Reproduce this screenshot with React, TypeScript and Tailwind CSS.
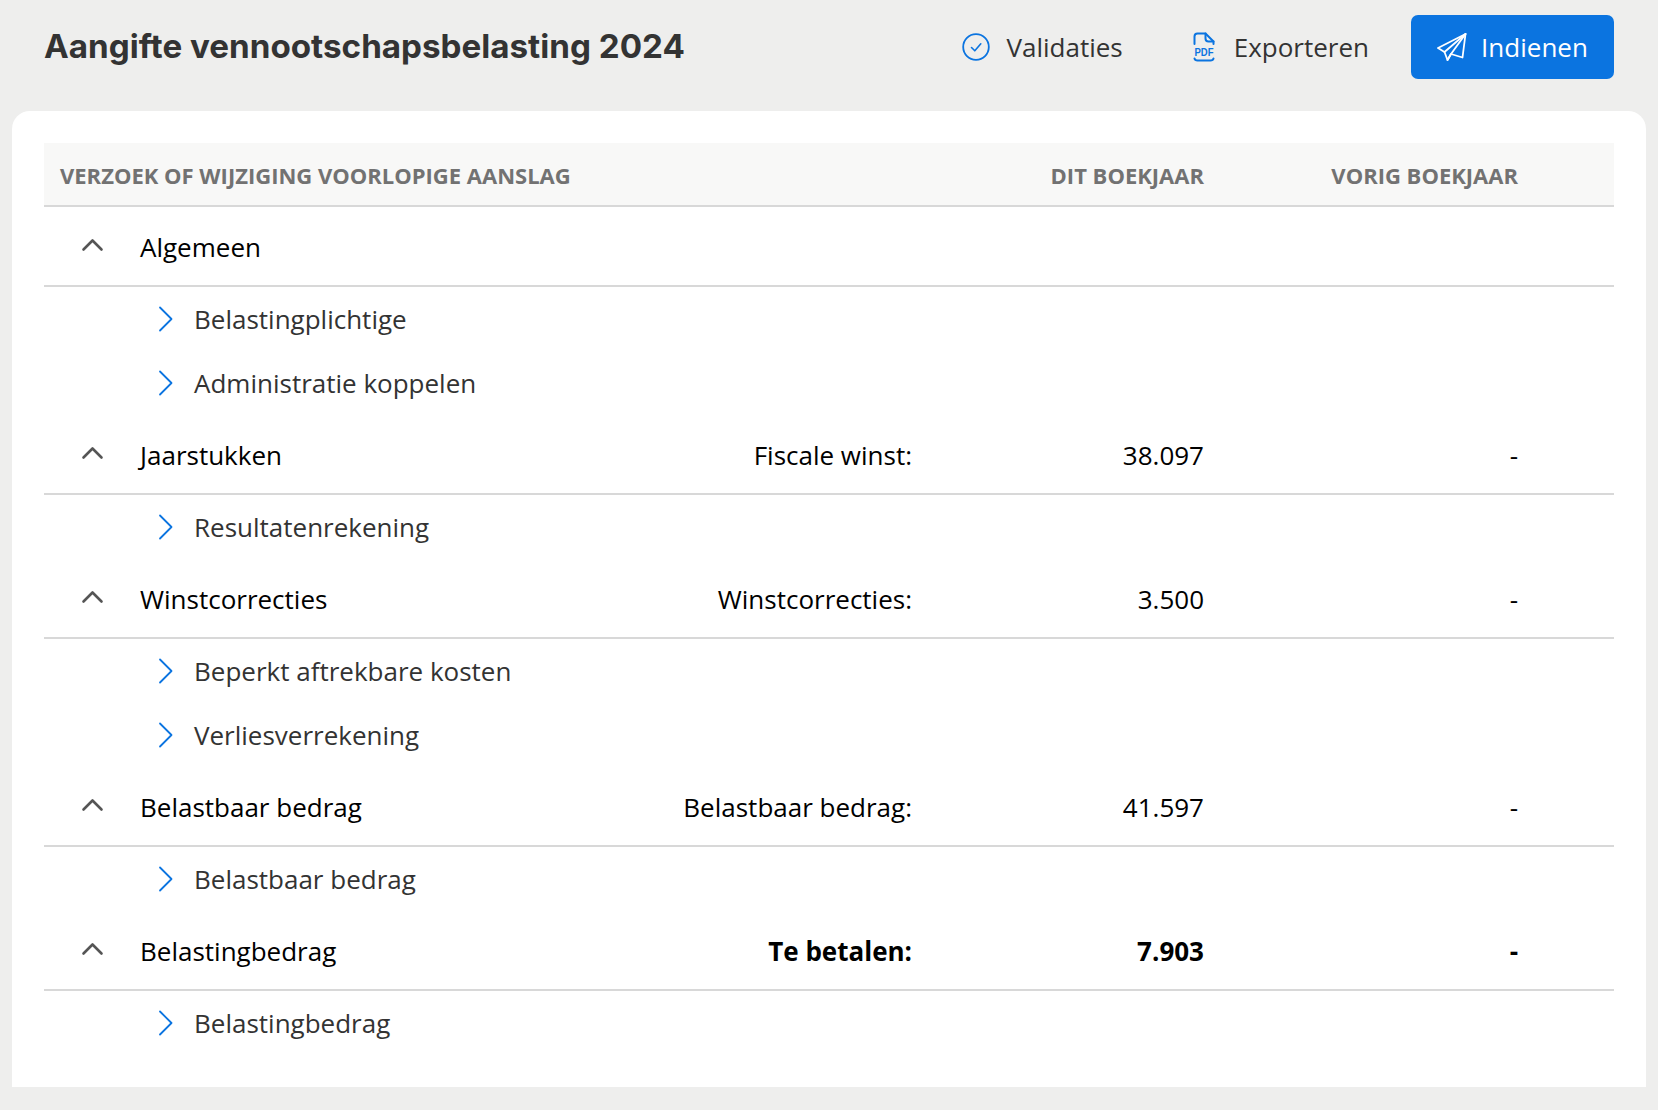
const Up = () => (
  <svg width="26" height="16" viewBox="0 0 26 16" fill="none" stroke="#555" strokeWidth="2.6" strokeLinecap="round" strokeLinejoin="round" className="block">
    <path d="M3.5 12.5 L12.5 3.5 L21.5 12.5" />
  </svg>
);
const Right = () => (
  <svg width="16" height="26" viewBox="0 0 16 26" fill="none" stroke="#0b74e0" strokeWidth="1.8" strokeLinecap="round" strokeLinejoin="round" className="block">
    <path d="M3 1.5 L14.5 13 L3 24.5" />
  </svg>
);
const Check = () => (
  <svg width="28" height="28" viewBox="0 0 28 28" fill="none" stroke="#0b74e0" className="block">
    <circle cx="14" cy="14" r="12.8" strokeWidth="1.8" />
    <path d="M9.5 14.5 L12.8 17.8 L18.8 10.8" strokeWidth="1.6" strokeLinecap="round" strokeLinejoin="round" />
  </svg>
);
const Pdf = () => (
  <svg width="22" height="30" viewBox="0 0 22 30" fill="none" stroke="#0b74e0" strokeWidth="2" strokeLinecap="round" strokeLinejoin="round" className="block">
    <path d="M1.5 12 V4.5 Q1.5 1.5 4.5 1.5 H12.5 L20.5 9.5 V12" />
    <path d="M12.5 1.5 V6.5 Q12.5 9.5 15.5 9.5 H20.5" />
    <path d="M1.5 26.5 Q2 28.5 4.5 28.5 H17.5 Q20 28.5 20.5 26.5" />
    <text transform="translate(11 23.5) scale(1 1.2)" textAnchor="middle" fill="#0b74e0" stroke="none" fontSize="9.5" fontWeight="700" fontFamily="'Liberation Sans', sans-serif">PDF</text>
  </svg>
);
const Plane = () => (
  <svg width="30" height="28" viewBox="0 0 30 28" fill="none" stroke="#fff" strokeWidth="1.8" strokeLinecap="round" strokeLinejoin="round" className="block">
    <path d="M28.5 1 L1 15 L7.5 19 L10.5 27 L14 21 L25.5 24.5 Z" />
    <path d="M28.5 1 L7.5 19" />
    <path d="M28.5 1 L14 21 L10.5 27" />
  </svg>
);

type Group = { title: string; label?: string; value?: string; prev?: string; strong?: boolean; items: string[] };

const groups: Group[] = [
  { title: "Algemeen", items: ["Belastingplichtige", "Administratie koppelen"] },
  { title: "Jaarstukken", label: "Fiscale winst:", value: "38.097", prev: "-", items: ["Resultatenrekening"] },
  { title: "Winstcorrecties", label: "Winstcorrecties:", value: "3.500", prev: "-", items: ["Beperkt aftrekbare kosten", "Verliesverrekening"] },
  { title: "Belastbaar bedrag", label: "Belastbaar bedrag:", value: "41.597", prev: "-", items: ["Belastbaar bedrag"] },
  { title: "Belastingbedrag", label: "Te betalen:", value: "7.903", prev: "-", strong: true, items: ["Belastingbedrag"] },
];

const font = { fontFamily: "'Open Sans', sans-serif" };

export default function App() {
  return (
    <div className="h-[1110px] bg-[#eeeeed] overflow-hidden text-[#333]" style={font}>
      <header className="h-[111px] flex items-start pl-[44px] pr-[44px]">
        <h1 className="mt-[25px] text-[33.2px] leading-[42px] font-bold text-[#333]" style={{ fontFamily: "Inter, sans-serif" }}>
          Aangifte vennootschapsbelasting 2024
        </h1>
        <div className="ml-auto mt-[15px] flex items-center h-[64px]">
          <button className="flex items-center gap-[16px] text-[26px] text-[#333]">
            <Check />
            Validaties
          </button>
          <button className="ml-[70px] flex items-center gap-[19px] text-[26px] text-[#333]">
            <Pdf />
            Exporteren
          </button>
          <button className="ml-[42px] flex items-center gap-[14px] h-[64px] w-[203px] justify-center rounded-[7px] bg-[#0b74e0] text-[26px] font-medium text-white">
            <Plane />
            Indienen
          </button>
        </div>
      </header>
      <main className="mx-[12px] h-[976px] rounded-t-[18px] bg-white px-[32px] pt-[32px]">
        <div className="flex h-[64px] items-center border-b-2 border-[#d8d8d8] bg-[#f8f8f7] pt-[3px] pr-[96px] text-[22px] font-bold text-[#727272]">
          <div className="pl-[16px] flex-1">VERZOEK OF WIJZIGING VOORLOPIGE AANSLAG</div>
          <div className="w-[292px] text-right">DIT BOEKJAAR</div>
          <div className="w-[314px] text-right">VORIG BOEKJAAR</div>
        </div>
        {groups.map((g) => (
          <section key={g.title}>
            <div className="flex h-[80px] items-center border-b-2 border-[#d8d8d8] pt-[2px] pr-[96px] text-[26px] text-black">
              <div className="w-[36px] ml-[36px] flex justify-start -mt-[4px]"><Up /></div>
              <div className="ml-[24px] flex-1">{g.title}</div>
              <div className={`text-right ${g.strong ? "font-bold" : ""}`}>{g.label}</div>
              <div className={`w-[292px] text-right ${g.strong ? "font-bold" : ""}`}>{g.value}</div>
              <div className={`w-[314px] text-right ${g.strong ? "font-bold" : ""}`}>{g.prev}</div>
            </div>
            {g.items.map((it) => (
              <div key={it} className="flex h-[64px] items-center pl-[113px] text-[26px] text-[#333]">
                <Right />
                <span className="ml-[21px]">{it}</span>
              </div>
            ))}
          </section>
        ))}
      </main>
    </div>
  );
}
